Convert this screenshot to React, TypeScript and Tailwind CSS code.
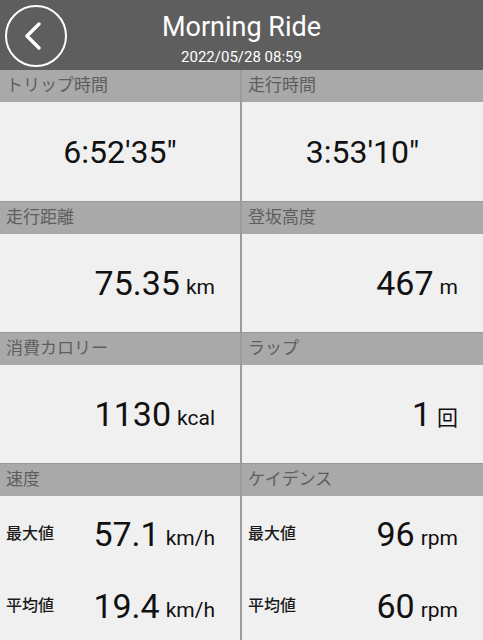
import React from 'react';

const font = { fontFamily: 'Roboto, "Noto Sans CJK JP", sans-serif' };

function Label({ text }: { text: string }) {
    return (
        <div className="h-[32px] bg-[#a9a9a9] flex items-center pl-[6px] text-[17px] text-[#5e5e5e]">
            {text}
        </div>
    );
}

function Value({ num, unit, center }: { num: string; unit?: string; center?: boolean }) {
    return (
        <div className={`flex items-center ${center ? 'justify-center' : 'justify-end pr-[25px]'} h-full`}>
            <span className={`${center ? 'text-[32px]' : 'text-[34px]'} text-[#111] leading-none`}>{num}</span>
            {unit && <span className="ml-[6px] text-[21px] text-[#111] leading-none mt-[8px]">{unit}</span>}
        </div>
    );
}

function Cell({ label, children, left }: { label: string; children: React.ReactNode; left?: boolean }) {
    return (
        <div className={`flex flex-col ${left ? 'border-r-2 border-[#9c9c9c]' : ''}`}>
            <Label text={label} />
            <div className="flex-1 bg-[#f0f0f0]">{children}</div>
        </div>
    );
}

function Section({ children, tall }: { children: React.ReactNode; tall?: boolean }) {
    return (
        <div className={`grid grid-cols-[242px_241px] border-t border-[#999] ${tall ? 'h-[177px]' : 'h-[131px]'}`}>
            {children}
        </div>
    );
}

function SubRow({ name, num, unit }: { name: string; num: string; unit: string }) {
    return (
        <div className="h-[72px] flex items-center pl-[6px] pr-[25px]">
            <span className="text-[16px] font-medium text-[#1a1a1a]">{name}</span>
            <div className="flex-1 flex items-center justify-end">
                <span className="text-[34px] text-[#111] leading-none">{num}</span>
                <span className="ml-[6px] text-[21px] text-[#111] leading-none mt-[8px]">{unit}</span>
            </div>
        </div>
    );
}

export default function App() {
    return (
        <div className="w-[483px] h-[640px] overflow-hidden bg-[#f0f0f0]" style={font}>
            {/* Header */}
            <div className="h-[70px] bg-[#5e5e5e] relative flex flex-col items-center">
                <button className="absolute left-[5px] top-[5px] w-[62px] h-[62px] rounded-full border-2 border-white flex items-center justify-center pr-[6px]">
                    <svg width="20" height="28" viewBox="0 0 20 28" fill="none" stroke="white" strokeWidth="3.4" strokeLinecap="round" strokeLinejoin="round">
                        <polyline points="16 2 4 14 16 26" />
                    </svg>
                </button>
                <div className="text-white text-[27px] leading-none mt-[14px]">Morning Ride</div>
                <div className="text-white text-[15px] leading-none mt-[9px]">2022/05/28 08:59</div>
            </div>

            <div className="grid grid-cols-[242px_241px] h-[131px]">
                <Cell label="トリップ時間" left><Value num={"6:52'35\""} center /></Cell>
                <Cell label="走行時間"><Value num={"3:53'10\""} center /></Cell>
            </div>

            <Section>
                <Cell label="走行距離" left><Value num="75.35" unit="km" /></Cell>
                <Cell label="登坂高度"><Value num="467" unit="m" /></Cell>
            </Section>

            <Section>
                <Cell label="消費カロリー" left><Value num="1130" unit="kcal" /></Cell>
                <Cell label="ラップ"><Value num="1" unit="回" /></Cell>
            </Section>

            <Section tall>
                <Cell label="速度" left>
                    <div className="pt-[2px]">
                        <SubRow name="最大値" num="57.1" unit="km/h" />
                        <SubRow name="平均値" num="19.4" unit="km/h" />
                    </div>
                </Cell>
                <Cell label="ケイデンス">
                    <div className="pt-[2px]">
                        <SubRow name="最大値" num="96" unit="rpm" />
                        <SubRow name="平均値" num="60" unit="rpm" />
                    </div>
                </Cell>
            </Section>
        </div>
    );
}
